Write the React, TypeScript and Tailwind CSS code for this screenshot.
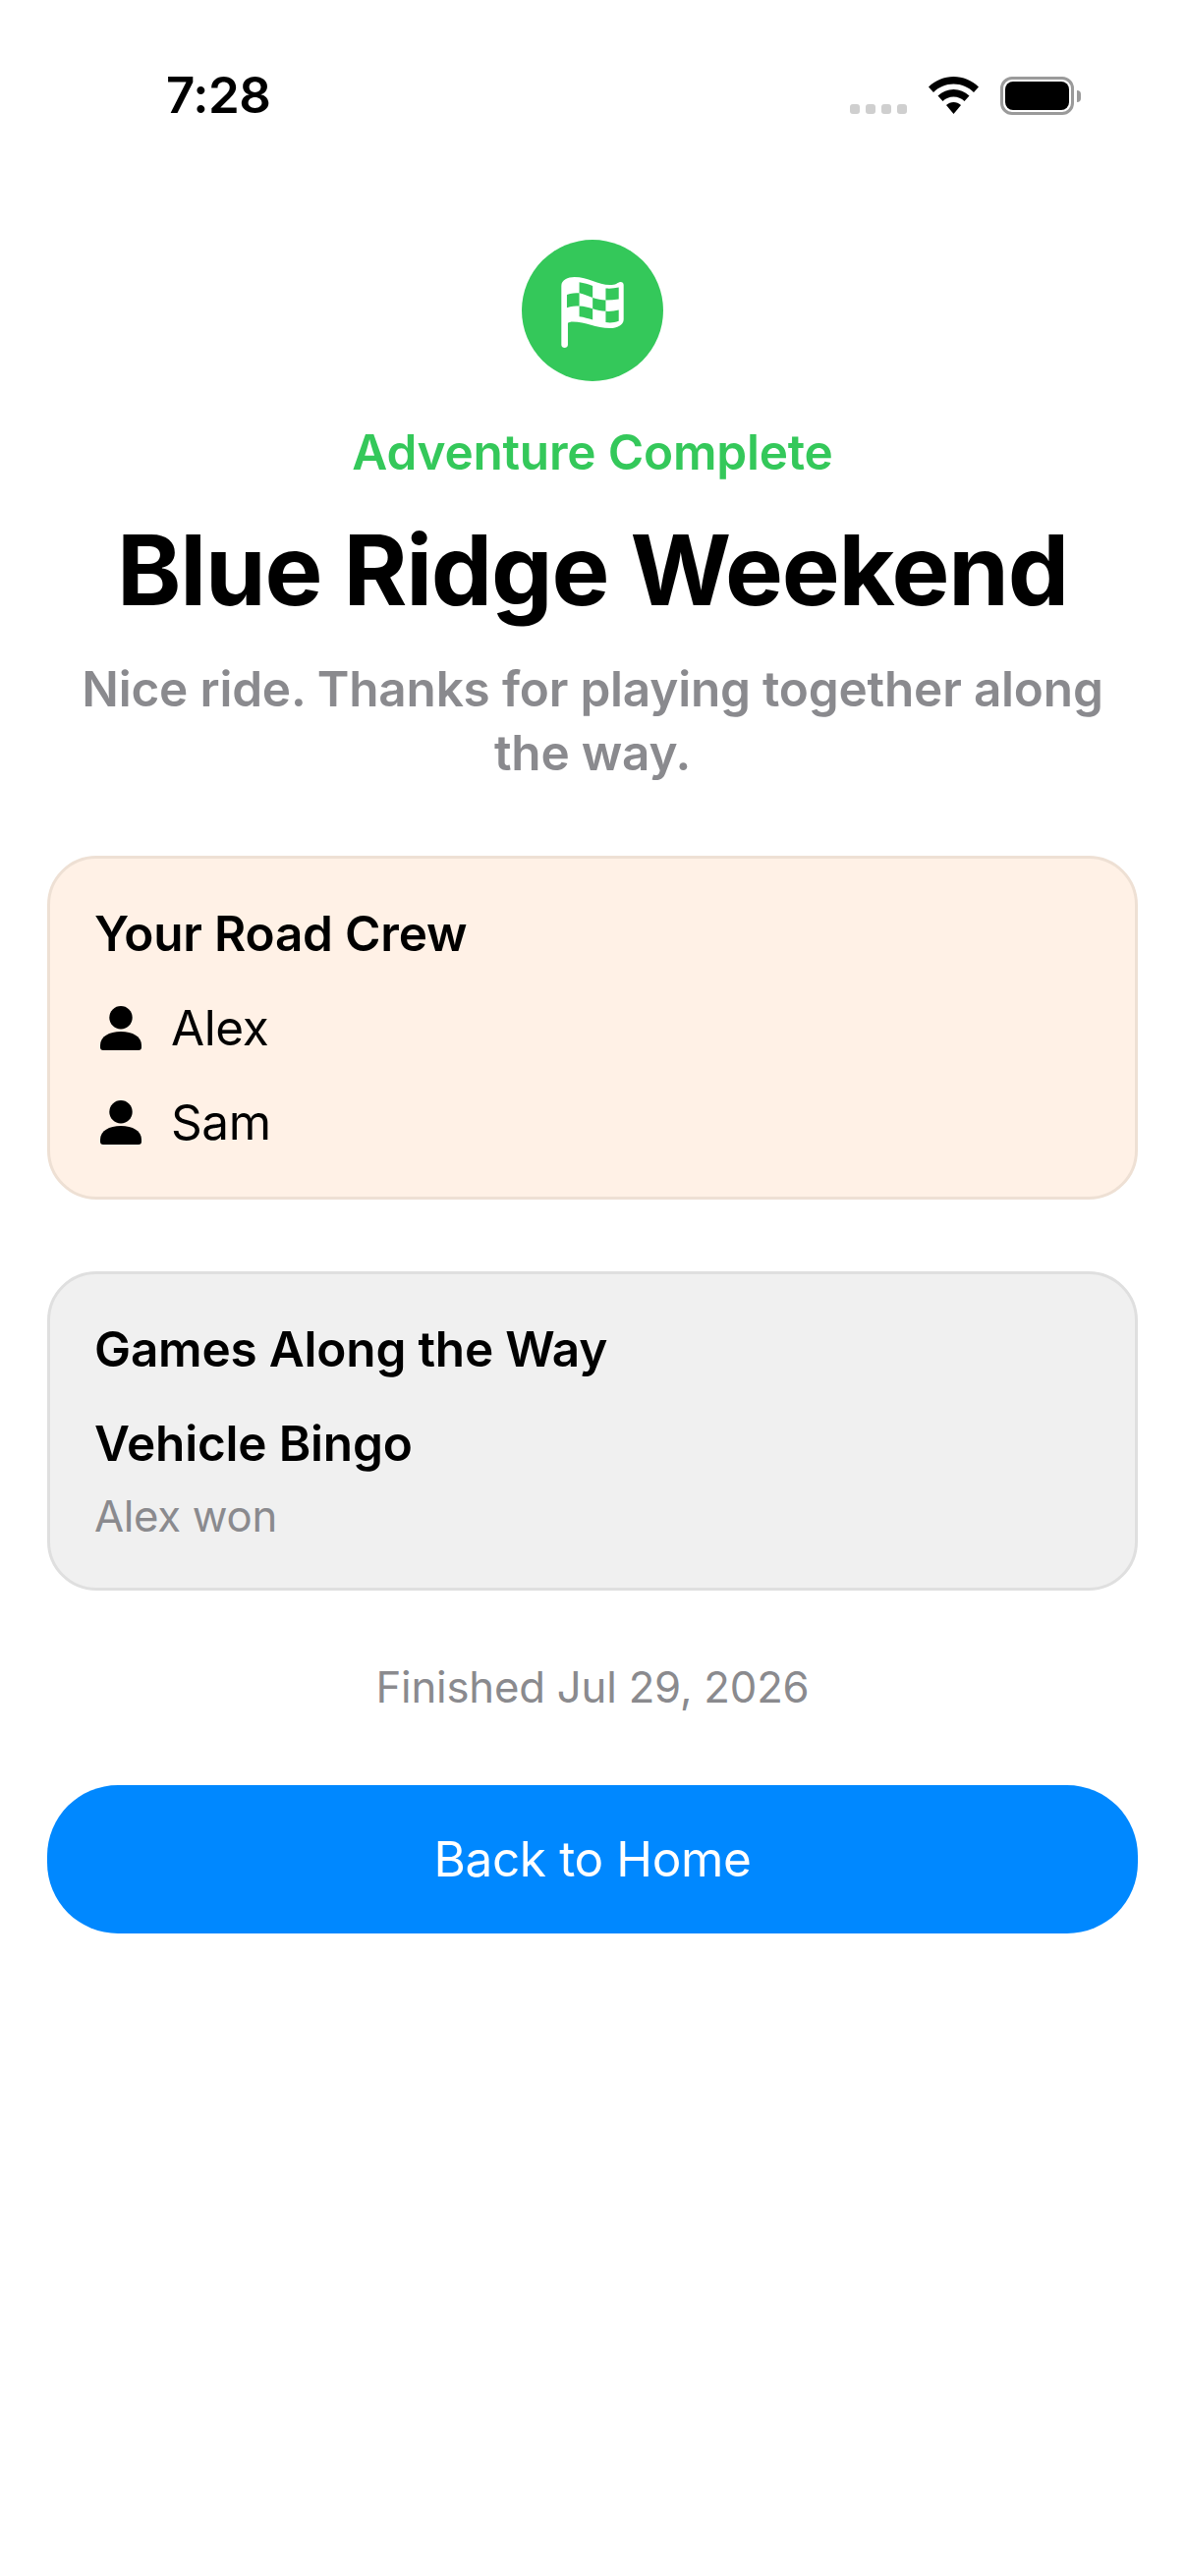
import React from "react";

function FlagIcon() {
  return (
    <svg viewBox="215 188 191 217" width={64} height={72}>
      <path
        fill="#fff"
        d="M215 396V215C215 197 235 188 255 188C300 188 330 215 370 212C385 211 390 203 397 203C402 203 406 206 406 212V318C406 335 385 345 365 345C320 345 290 325 250 325C243 325 238 327 235 329V396C235 402 230 405 225 405C220 405 215 402 215 396Z"
      />
      <g fill="#34C85A">
        <path d="M232 242C245 238 258 237 270 237V277C258 277 245 278 232 282Z" />
        <path d="M270 204C285 206 298 211 311 215V251C298 247 285 241 270 237Z" />
        <path d="M311 251C325 255 338 258 351 259V293C338 292 325 289 311 285Z" />
        <path d="M351 223C365 224 378 223 391 220V256C378 258 365 259 351 259Z" />
        <path d="M270 277C285 278 298 281 311 285V319C298 315 285 311 270 309Z" />
        <path d="M351 293C365 294 378 292 391 289V323C378 328 365 329 351 327Z" />
      </g>
    </svg>
  );
}

function PersonIcon() {
  return (
    <svg viewBox="0 0 42 45" width={42} height={45} className="shrink-0">
      <circle cx="21" cy="11.700" r="11.700" fill="#000" />
      <path
        fill="#000"
        d="M0 40C0 31 9 26 21 26C33 26 42 31 42 40V42C42 44 41 45 39 45H3C1 45 0 44 0 42Z"
      />
    </svg>
  );
}

function WifiIcon() {
  return (
    <svg viewBox="0 0 51 38" width={51} height={38}>
      <path
        fill="#000"
        d="M25.5 0C35 0 44 3.800 51 10.500L46 16C40.500 10.500 33.300 7.500 25.500 7.500C17.700 7.500 10.500 10.500 5 16L0 10.500C7 3.800 16 0 25.500 0Z"
      />
      <path
        fill="#000"
        d="M25.5 13C31.500 13 37 15.300 41.500 19.500L36.500 25C33.500 22 29.700 20.500 25.500 20.500C21.300 20.500 17.500 22 14.500 25L9.500 19.500C14 15.300 19.500 13 25.500 13Z"
      />
      <path
        fill="#000"
        d="M25.500 26C28.300 26 30.800 27 33 29L25.500 38L18 29C20.200 27 22.700 26 25.500 26Z"
      />
    </svg>
  );
}

function StatusBar() {
  return (
    <div className="flex h-[234px] items-start justify-between pl-[169px] pr-[106px] pt-[66px]">
      <span className="text-[51px] font-semibold leading-[62px] tracking-[-0.5px] text-black">7:28</span>
      <div className="flex items-start pt-[12px]">
        <div className="mr-[22px] mt-[28px] flex gap-[6px]">
          <span className="h-[10px] w-[10px] rounded-[3px] bg-[#cfcfcf]" />
          <span className="h-[10px] w-[10px] rounded-[3px] bg-[#cfcfcf]" />
          <span className="h-[10px] w-[10px] rounded-[3px] bg-[#cfcfcf]" />
          <span className="h-[10px] w-[10px] rounded-[3px] bg-[#cfcfcf]" />
        </div>
        <WifiIcon />
        <div className="ml-[22px] flex items-center">
          <div className="h-[39px] w-[75px] rounded-[12px] border-[3px] border-[#9a9a9a] p-[2px]">
            <div className="h-full w-full rounded-[8px] bg-black" />
          </div>
          <div className="ml-[3px] h-[12px] w-[4px] rounded-r-full bg-[#9a9a9a]" />
        </div>
      </div>
    </div>
  );
}

export default function App() {
  return (
    <div
      className="min-h-[2622px] w-[1206px] bg-white"
      style={{ fontFamily: "Inter, 'Noto Sans', sans-serif" }}
    >
      <StatusBar />

      {/* header */}
      <div className="flex flex-col items-center px-[48px] text-center">
        <div className="mt-[10px] flex h-[144px] w-[144px] items-center justify-center rounded-full bg-[#34C85A] pt-[4px]">
          <FlagIcon />
        </div>
        <p className="mt-[41px] text-[49.5px] font-semibold leading-[62px] tracking-[-0.2px] text-[#34C85A]">
          Adventure Complete
        </p>
        <h1 className="mt-[27px] text-[99px] font-bold leading-[124px] tracking-[-1.2px] text-black">
          Blue Ridge Weekend
        </h1>
        <p className="mt-[27px] text-[49.5px] font-semibold leading-[65px] tracking-[-0.2px] text-[#8a8a8e]">
          Nice ride. Thanks for playing together along the way.
        </p>
      </div>

      <div className="mt-[72px] flex flex-col px-[48px]">
        {/* crew */}
        <div className="flex flex-col gap-[34px] rounded-[50px] border-[3px] border-[#eee0d4] bg-[#fff1e6] px-[45px] py-[45px]">
          <h2 className="text-[49.5px] font-semibold leading-[62px] tracking-[-0.2px] text-black">Your Road Crew</h2>
          <div className="flex items-center gap-[30px] pl-[6px]">
            <PersonIcon />
            <span className="text-[49.5px] leading-[62px] tracking-[-0.4px] text-black">Alex</span>
          </div>
          <div className="flex items-center gap-[30px] pl-[6px]">
            <PersonIcon />
            <span className="text-[49.5px] leading-[62px] tracking-[-0.4px] text-black">Sam</span>
          </div>
        </div>

        {/* games */}
        <div className="mt-[73px] rounded-[50px] border-[3px] border-[#dfdfdf] bg-[#f0f0f0] px-[45px] py-[45px]">
          <h2 className="text-[49.5px] font-semibold leading-[62px] tracking-[-0.2px] text-black">Games Along the Way</h2>
          <p className="mt-[34px] text-[49.5px] font-semibold leading-[62px] tracking-[-0.2px] text-black">Vehicle Bingo</p>
          <p className="mt-[17px] text-[43.7px] leading-[54px] tracking-[-0.3px] text-[#8a8a8e]">Alex won</p>
        </div>

        <p className="mt-[72px] text-center text-[43.7px] leading-[54px] tracking-[-0.2px] text-[#8a8a8e]">
          Finished Jul 29, 2026
        </p>

        <button className="mt-[72px] h-[151px] w-full rounded-[72px] bg-[#0088FF] text-[49.5px] tracking-[-0.4px] text-white">
          Back to Home
        </button>
      </div>
    </div>
  );
}
